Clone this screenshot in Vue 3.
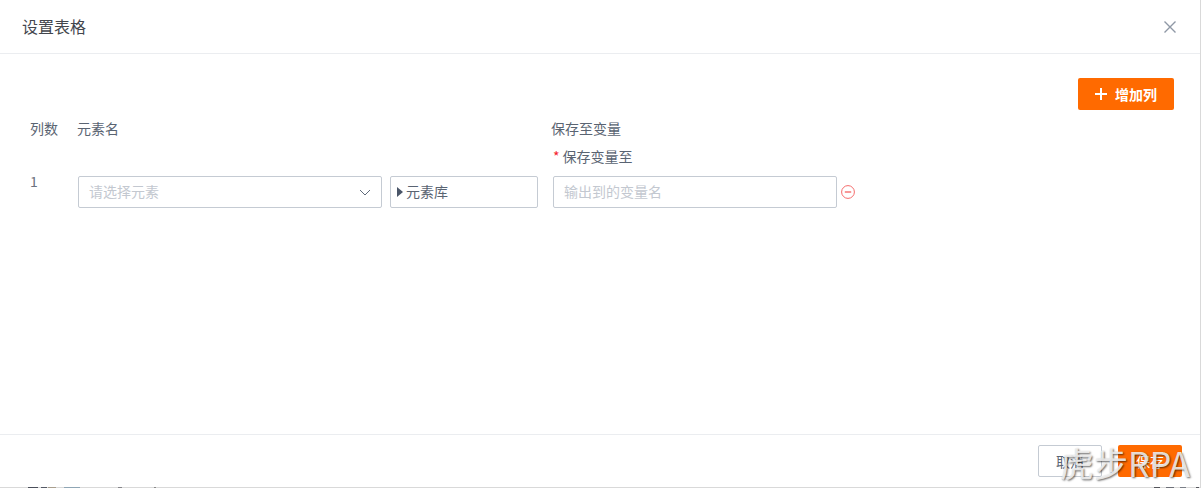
<template>
  <div class="page">
    <div class="dialog">
      <div class="dialog-header">
        <span class="dialog-title">设置表格</span>
        <svg class="btn-close" width="12" height="12" viewBox="0 0 12 12">
          <path d="M0.5 0.5L11.5 11.5M11.5 0.5L0.5 11.5" stroke="#8f98a6" stroke-width="1.4" fill="none" />
        </svg>
      </div>

      <div class="dialog-body">
        <div class="toolbar">
          <button class="btn-add">
            <svg width="12" height="12" viewBox="0 0 12 12">
              <path d="M6 0V12M0 6H12" stroke="#fff" stroke-width="2" fill="none" />
            </svg>
            <span>增加列</span>
          </button>
        </div>

        <div class="table-head">
          <span class="col-index">列数</span>
          <span class="col-element">元素名</span>
          <span>保存至变量</span>
        </div>

        <div class="table-row">
          <span class="col-index row-index">1</span>
          <div class="col-element row-fields">
            <div class="input select">
              <span class="placeholder">请选择元素</span>
              <svg width="12" height="7" viewBox="0 0 12 7">
                <path d="M1 1L6 6L11 1" stroke="#606b7b" stroke-width="1" fill="none" />
              </svg>
            </div>
            <div class="input library">
              <i class="caret"></i>
              <span class="library-name">元素库</span>
            </div>
          </div>
          <div class="var-field">
            <label class="var-label"><span class="required">*</span>保存变量至</label>
            <div class="var-input-row">
              <div class="input var-input">
                <span class="placeholder">输出到的变量名</span>
              </div>
              <svg class="btn-remove" width="14" height="14" viewBox="0 0 14 14">
                <circle cx="7" cy="7" r="6.4" stroke="#f56c6c" stroke-width="1" fill="none" />
                <path d="M3.8 7H10.2" stroke="#f56c6c" stroke-width="1.4" fill="none" />
              </svg>
            </div>
          </div>
        </div>
      </div>

      <div class="dialog-footer">
        <button class="btn-cancel">取消</button>
        <button class="btn-save">保存</button>
      </div>
    </div>

    <!-- page behind the dialog, only the top edge of its text shows -->
    <div class="backdrop-strip">
      <i
        v-for="(seg, i) in stripSegments"
        :key="i"
        :style="{ marginLeft: seg.gap + 'px', width: seg.width + 'px', background: seg.color }"
      ></i>
    </div>
    <div class="watermark">虎步RPA</div>
  </div>
</template>

<script setup>
const stripSegments = [
  { gap: 28, width: 10, color: '#4a4f5a' },
  { gap: 3, width: 6, color: '#555a66' },
  { gap: 1, width: 8, color: '#a99f8e' },
  { gap: 8, width: 16, color: '#8fa6b5' },
  { gap: 38, width: 4, color: '#85858a' },
  { gap: 32, width: 2, color: '#8a8a8a' },
  { gap: 998, width: 6, color: '#55565c' },
  { gap: 6, width: 8, color: '#6d7078' },
  { gap: 6, width: 6, color: '#7a7f88' },
  { gap: 10, width: 3, color: '#55565c' }
]
</script>

<style>
html, body {
  margin: 0;
  overflow: hidden;
}
</style>

<style scoped>
.page {
  position: relative;
  width: 1201px;
  height: 488px;
  overflow: hidden;
  background: #d9d9d9;
  font-family: "Noto Sans CJK SC", "Liberation Sans", sans-serif;
  font-size: 14px;
  color: #5a6472;
  display: flex;
  flex-direction: column;
}

.dialog {
  flex: 1;
  display: flex;
  flex-direction: column;
  min-height: 0;
  margin-right: 1px;
  background: #fff;
}

.dialog-header {
  height: 54px;
  box-sizing: border-box;
  border-bottom: 1px solid #ebedf0;
  padding: 0 24px 0 22px;
  display: flex;
  justify-content: space-between;
  align-items: center;
}

.dialog-title {
  font-size: 16px;
  color: #43464d;
  padding-bottom: 2px;
}

.btn-close {
  margin-top: 1px;
}

.dialog-body {
  flex: 1;
  padding: 24px 26px 0 30px;
}

.toolbar {
  display: flex;
  justify-content: flex-end;
}

.btn-add {
  width: 96px;
  height: 32px;
  border: none;
  border-radius: 2px;
  background: #ff6a00;
  color: #fff;
  font: inherit;
  font-weight: 700;
  display: flex;
  align-items: center;
  justify-content: center;
  gap: 8px;
  padding: 0;
}

.table-head {
  display: flex;
  margin-top: 8px;
  line-height: 20px;
}

.col-index {
  width: 47px;
  flex-shrink: 0;
}

.table-head .col-element {
  width: 474px;
}

.table-row {
  display: flex;
  margin-top: 8px;
}

.row-index {
  margin-top: 25px;
  line-height: 20px;
  color: #6b7280;
}

.row-fields {
  display: flex;
  gap: 8px;
  margin-top: 30px;
  margin-left: 1px;
}

.input {
  height: 32px;
  box-sizing: border-box;
  border: 1px solid #c5cbd3;
  border-radius: 2px;
  display: flex;
  align-items: center;
  background: #fff;
}

.placeholder,
.library-name {
  margin-bottom: 2px;
}

.placeholder {
  color: #c3c8d0;
}

.select {
  width: 304px;
  padding: 0 10px;
  justify-content: space-between;
}

.library {
  width: 148px;
  padding-left: 6px;
  gap: 3px;
}

.caret {
  width: 0;
  height: 0;
  border-left: 6px solid #4a5568;
  border-top: 5px solid transparent;
  border-bottom: 5px solid transparent;
}

.var-field {
  margin-left: 15px;
}

.var-label {
  display: block;
  line-height: 20px;
  height: 30px;
}

.required {
  color: #f5222d;
  margin-right: 3px;
}

.var-input-row {
  display: flex;
  align-items: center;
  gap: 4px;
}

.var-input {
  width: 284px;
  padding: 0 10px;
}

.dialog-footer {
  height: 53px;
  box-sizing: border-box;
  border-top: 1px solid #ebedf0;
  display: flex;
  justify-content: flex-end;
  gap: 16px;
  padding: 10px 18px 0 0;
}

.btn-cancel,
.btn-save {
  width: 64px;
  height: 32px;
  border-radius: 2px;
  font: inherit;
  padding: 0;
}

.btn-cancel {
  background: #fff;
  border: 1px solid #c5cbd3;
  color: #5a6472;
}

.btn-save {
  background: #ff6a00;
  border: none;
  color: #fff;
}

.backdrop-strip {
  height: 1px;
  display: flex;
}

.backdrop-strip i {
  display: block;
  height: 1px;
  flex-shrink: 0;
}

.watermark {
  position: absolute;
  right: 11px;
  bottom: 5px;
  font-size: 34px;
  line-height: 40px;
  color: rgba(240, 240, 240, 0.9);
  text-shadow: 1px 1px 2px rgba(0, 0, 0, 0.6);
}
</style>
